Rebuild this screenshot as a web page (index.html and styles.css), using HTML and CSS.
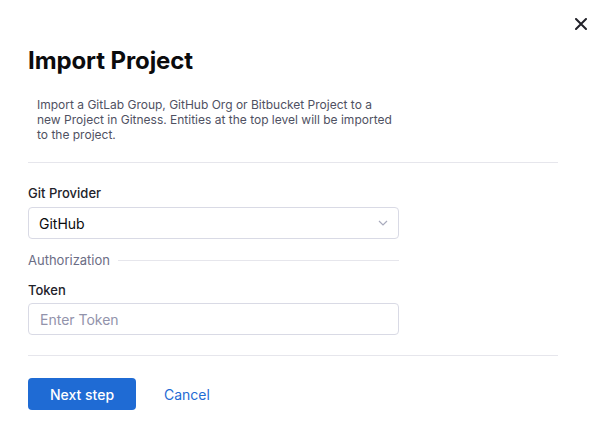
FILE: index.html
```html
<!DOCTYPE html>
<html>
<head>
<meta charset="utf-8">
<link rel="stylesheet" href="styles.css">
</head>
<body>
<div class="dialog">
  <button class="close" aria-label="Close">
    <svg width="12" height="12" viewBox="0 0 12 12"><path d="M1 1L11 11M11 1L1 11" stroke="#22222a" stroke-width="2" stroke-linecap="round"/></svg>
  </button>
  <h1 class="title">Import Project</h1>
  <p class="desc">Import a GitLab Group, GitHub Org or Bitbucket Project to a new Project in Gitness. Entities at the top level will be imported to the project.</p>
  <hr class="sep">
  <div class="form">
    <label class="label">Git Provider</label>
    <div class="select">
      <span>GitHub</span>
      <svg width="10" height="6" viewBox="0 0 10 6"><path d="M1 1L5 5L9 1" fill="none" stroke="#a9abbd" stroke-width="1.2"/></svg>
    </div>
    <div class="divider"><span>Authorization</span><i></i></div>
    <label class="label">Token</label>
    <div class="input">Enter Token</div>
  </div>
  <hr class="sep sep2">
  <div class="actions">
    <button class="primary">Next step</button>
    <button class="link">Cancel</button>
  </div>
</div>
</body>
</html>
```
FILE: styles.css
```css
* { box-sizing: border-box; }
html, body { margin: 0; padding: 0; background: #fff; }
body { font-family: Inter, "Noto Sans", sans-serif; color: #0b0b0d; }
.dialog { position: relative; width: 603px; height: 439px; padding: 46px 45px 0 28px; }
.close { position: absolute; top: 18px; right: 16px; width: 12px; height: 12px; padding: 0; border: 0; background: none; display: flex; }
.title { margin: 0; font-size: 24px; font-weight: 700; line-height: 30px; letter-spacing: -0.1px; color: #0b0b0d; }
.desc { margin: 21px 0 0 9px; width: 360px; font-size: 12px; line-height: 15px; color: #4f5162; }
.sep { margin: 20px 0 0 0; border: 0; border-top: 1px solid #e6e6ec; height: 0; width: 530px; }
.form { width: 371px; padding-top: 22px; display: flex; flex-direction: column; }
.label { font-size: 13px; font-weight: 500; line-height: 16px; color: #22222a; }
.select { margin-top: 6px; height: 32px; border: 1px solid #d9dae5; border-radius: 4px; display: flex; align-items: center; justify-content: space-between; padding: 0 10px 0 10px; font-size: 14px; color: #0b0b0d; }
.divider { margin-top: 13px; height: 16px; display: flex; align-items: center; gap: 8px; font-size: 13px; color: #6b6d85; }
.divider i { flex: 1; height: 1px; background: #e6e6ec; }
.divider + .label { margin-top: 14px; }
.input { margin-top: 5px; height: 32px; border: 1px solid #d9dae5; border-radius: 4px; display: flex; align-items: center; padding: 0 11px; font-size: 14px; color: #9293ab; }
.sep2 { margin-top: 20px; }
.actions { margin-top: 22px; display: flex; align-items: center; gap: 28px; }
.primary { width: 108px; height: 32px; border: 0; border-radius: 4px; background: #1f6bd4; color: #fff; font-family: inherit; font-size: 14px; font-weight: 500; }
.link { border: 0; background: none; padding: 0; font-family: inherit; font-size: 14px; color: #1f6bd4; }
```
